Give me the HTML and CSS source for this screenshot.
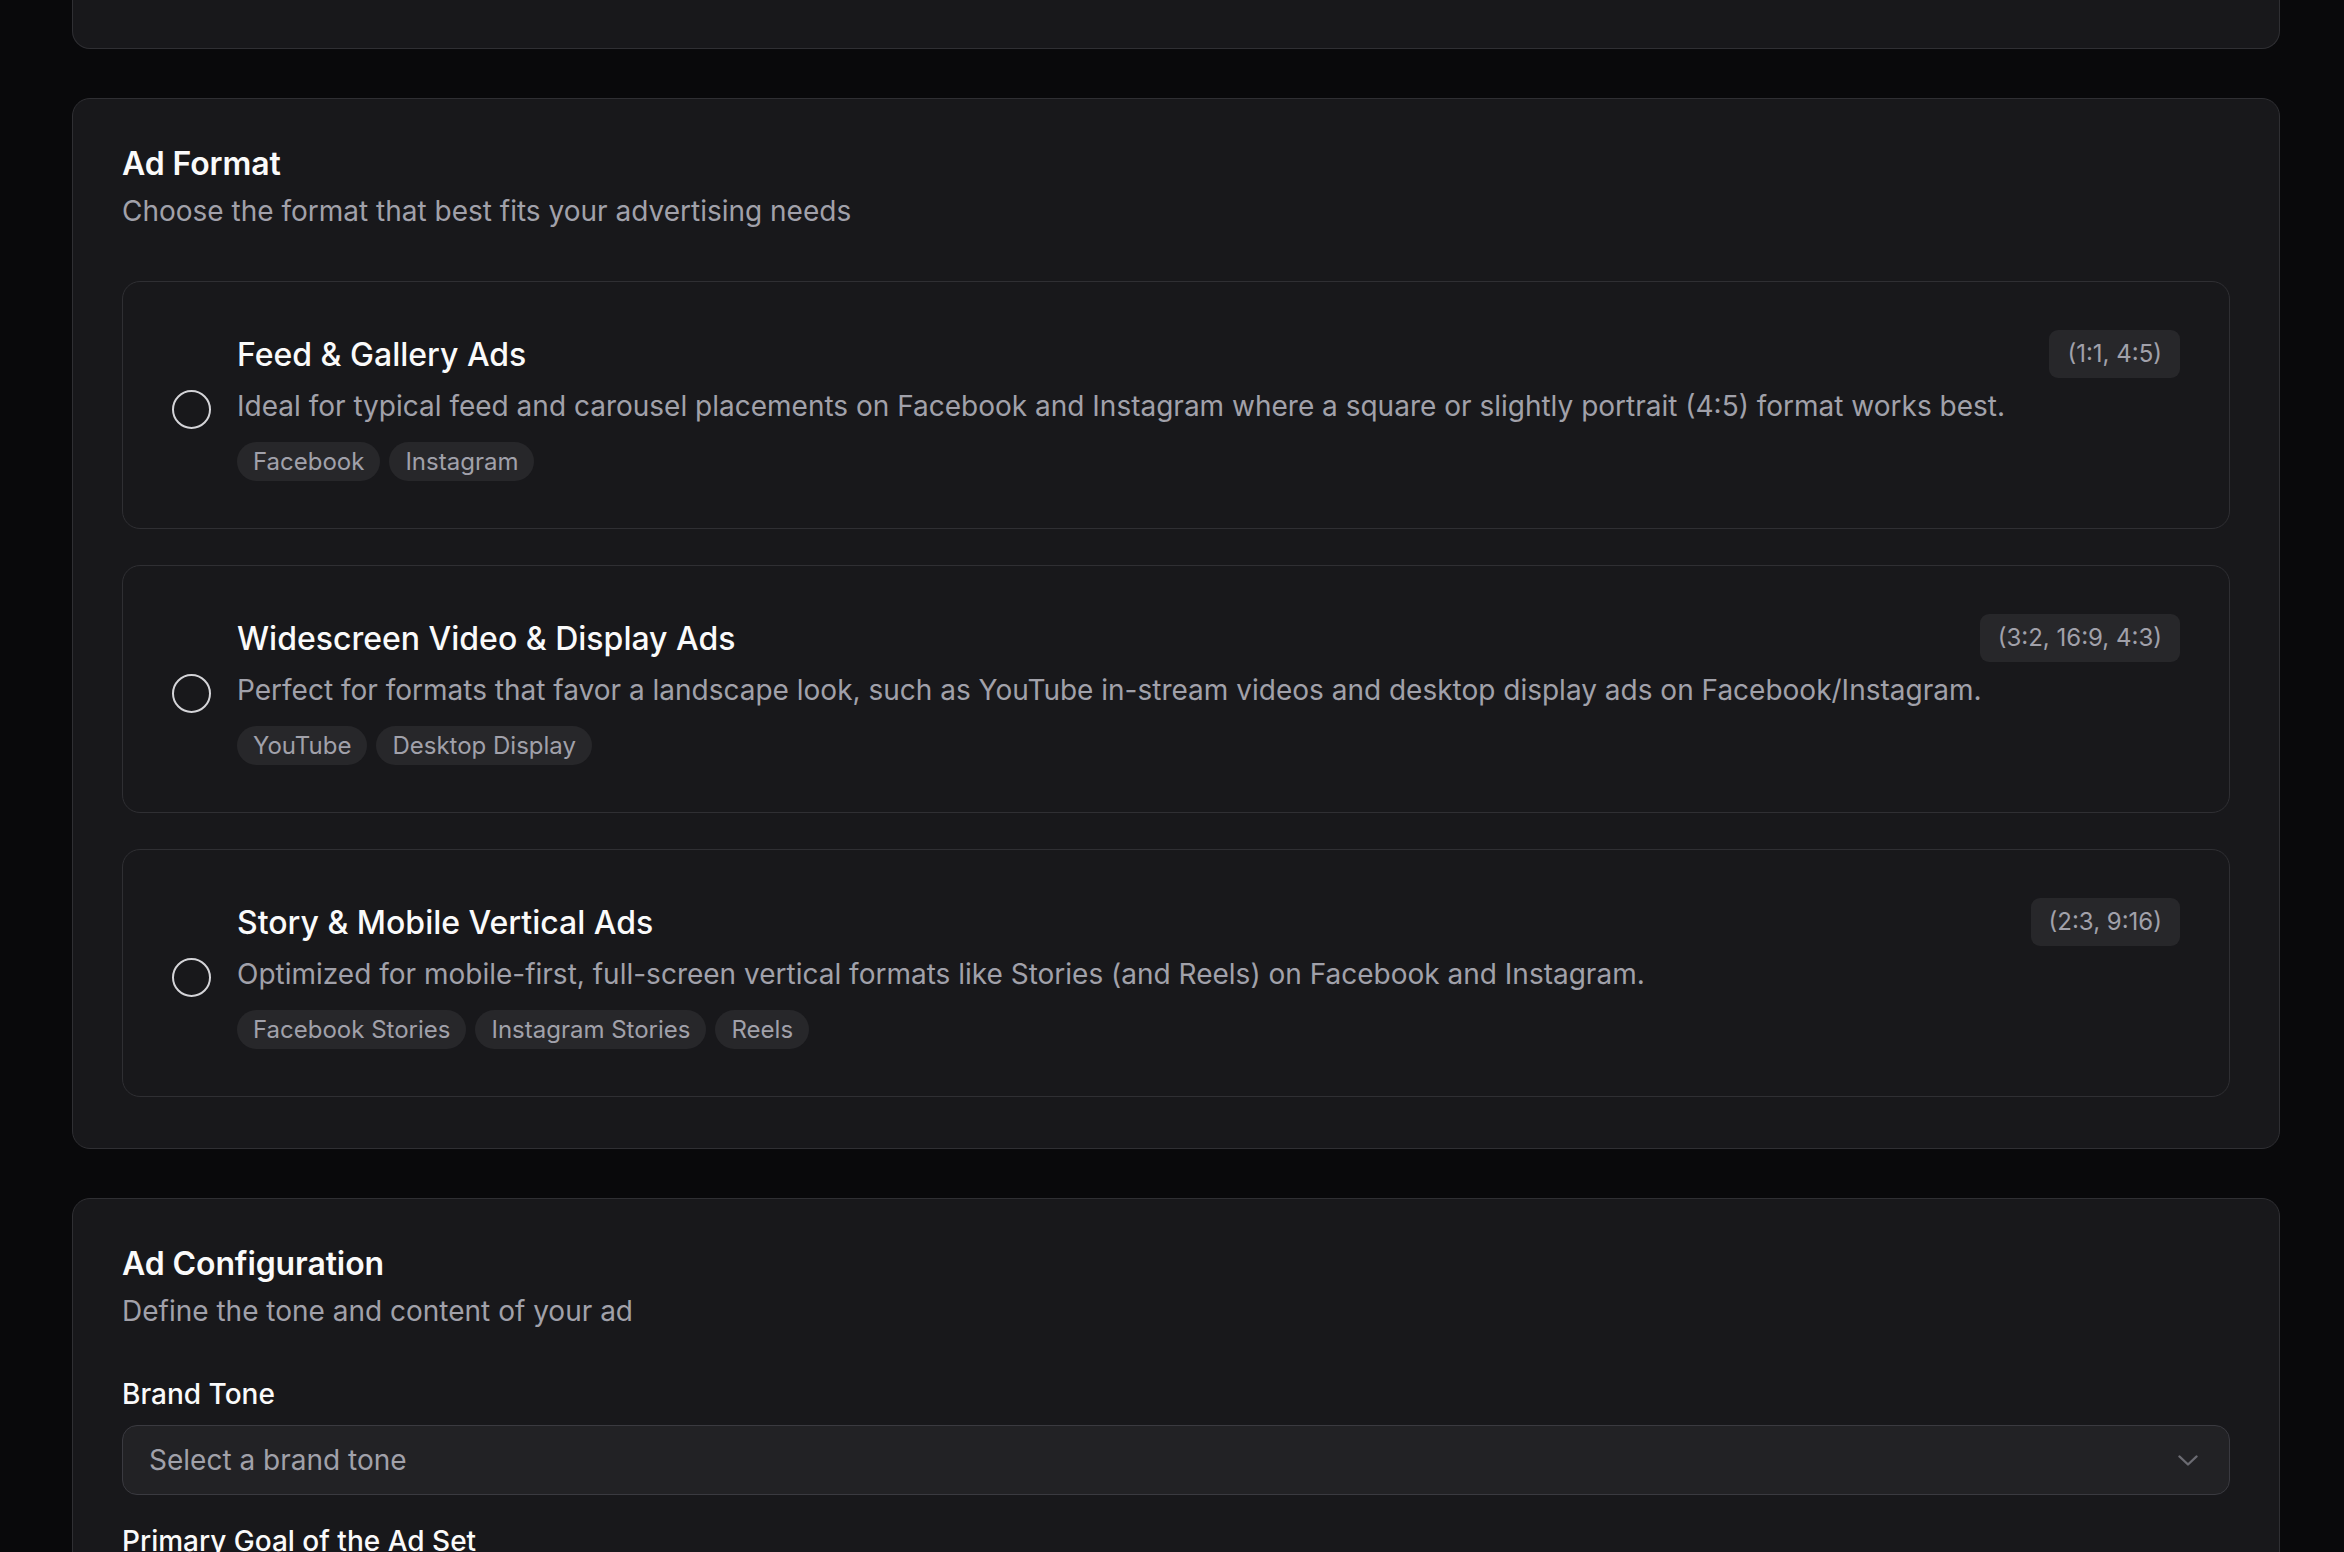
FILE: index.html
```html
<!DOCTYPE html>
<html lang="en">
<head>
<meta charset="utf-8">
<title>Ad Builder</title>
<link rel="stylesheet" href="styles.css">
</head>
<body>
<main class="page">
  <section class="card card-cut"></section>

  <section class="card">
    <header class="card-head">
      <h2 class="card-title">Ad Format</h2>
      <p class="card-sub">Choose the format that best fits your advertising needs</p>
    </header>
    <div class="options">
      <label class="option">
        <span class="radio"></span>
        <div class="option-body">
          <div class="option-head">
            <span class="option-title">Feed &amp; Gallery Ads</span>
            <span class="ratio">(1:1, 4:5)</span>
          </div>
          <p class="option-desc">Ideal for typical feed and carousel placements on Facebook and Instagram where a square or slightly portrait (4:5) format works best.</p>
          <div class="tags"><span class="tag">Facebook</span><span class="tag">Instagram</span></div>
        </div>
      </label>
      <label class="option">
        <span class="radio"></span>
        <div class="option-body">
          <div class="option-head">
            <span class="option-title">Widescreen Video &amp; Display Ads</span>
            <span class="ratio">(3:2, 16:9, 4:3)</span>
          </div>
          <p class="option-desc">Perfect for formats that favor a landscape look, such as YouTube in-stream videos and desktop display ads on Facebook/Instagram.</p>
          <div class="tags"><span class="tag">YouTube</span><span class="tag">Desktop Display</span></div>
        </div>
      </label>
      <label class="option">
        <span class="radio"></span>
        <div class="option-body">
          <div class="option-head">
            <span class="option-title">Story &amp; Mobile Vertical Ads</span>
            <span class="ratio">(2:3, 9:16)</span>
          </div>
          <p class="option-desc">Optimized for mobile-first, full-screen vertical formats like Stories (and Reels) on Facebook and Instagram.</p>
          <div class="tags"><span class="tag">Facebook Stories</span><span class="tag">Instagram Stories</span><span class="tag">Reels</span></div>
        </div>
      </label>
    </div>
  </section>

  <section class="card">
    <header class="card-head">
      <h2 class="card-title">Ad Configuration</h2>
      <p class="card-sub">Define the tone and content of your ad</p>
    </header>
    <div class="field">
      <span class="field-label">Brand Tone</span>
      <div class="select">
        <span class="select-value">Select a brand tone</span>
        <svg class="chevron" width="20" height="11" viewBox="0 0 20 11" fill="none"><path d="M1.5 1.5 L10 9.5 L18.5 1.5" stroke="#6b6b72" stroke-width="2.4" stroke-linecap="round" stroke-linejoin="round"/></svg>
      </div>
    </div>
    <div class="field">
      <span class="field-label">Primary Goal of the Ad Set</span>
    </div>
  </section>
</main>
</body>
</html>
```

FILE: styles.css
```css
* { box-sizing: border-box; }
html, body { margin: 0; padding: 0; }
body {
  background: #09090b;
  font-family: Inter, "Noto Sans", "Liberation Sans", sans-serif;
  color: #fafafa;
  height: 1552px;
  overflow: hidden;
}
.page {
  width: 2208px;
  margin-left: 72px;
  display: flex;
  flex-direction: column;
  gap: 49px;
}
.card {
  background: #18181b;
  border: 1px solid #2f2f33;
  border-radius: 18px;
  padding: 48px 49px 51px;
}
.card-cut {
  height: 49px;
  border-top: none;
  border-radius: 0 0 18px 18px;
  padding: 0;
}
.card-head { margin-bottom: 50px; }
.card-title {
  margin: 0;
  font-size: 32px;
  line-height: 34px;
  font-weight: 600;
  letter-spacing: -0.1px;
}
.card-sub {
  margin: 10px 0 0;
  font-size: 28px;
  line-height: 40px;
  color: #a1a1aa;
}
.options { display: flex; flex-direction: column; gap: 36px; }
.option {
  display: flex;
  align-items: center;
  gap: 26px;
  border: 1px solid #2f2f33;
  border-radius: 18px;
  padding: 48px 49px 47px;
}
.radio {
  flex: none;
  width: 39px;
  height: 39px;
  border-radius: 50%;
  border: 2px solid #d4d4d8;
  margin-top: 7px;
}
.option-body { flex: 1; min-width: 0; }
.option-head {
  display: flex;
  justify-content: space-between;
  align-items: center;
  height: 48px;
}
.option-title { font-size: 32px; font-weight: 500; }
.ratio {
  background: #27272a;
  color: #a1a1aa;
  font-size: 24px;
  line-height: 48px;
  height: 48px;
  padding: 0 18px;
  border-radius: 9px;
}
.option-desc {
  margin: 8px 0 0;
  font-size: 28px;
  line-height: 40px;
  color: #a1a1aa;
}
.tags { display: flex; gap: 9px; margin-top: 16px; }
.tag {
  background: #27272a;
  color: #a1a1aa;
  font-size: 24px;
  line-height: 39px;
  height: 39px;
  padding: 0 16px;
  border-radius: 20px;
}
.field { display: flex; flex-direction: column; gap: 17px; }
.field + .field { margin-top: 33px; }
.field-label {
  font-size: 28px;
  line-height: 27px;
  font-weight: 500;
}
.select {
  height: 70px;
  background: #222225;
  border: 1px solid #3a3a40;
  border-radius: 15px;
  display: flex;
  align-items: center;
  justify-content: space-between;
  padding: 0 31px 0 26px;
}
.select-value { font-size: 28px; color: #a1a1aa; }
.chevron { display: block; }
```
